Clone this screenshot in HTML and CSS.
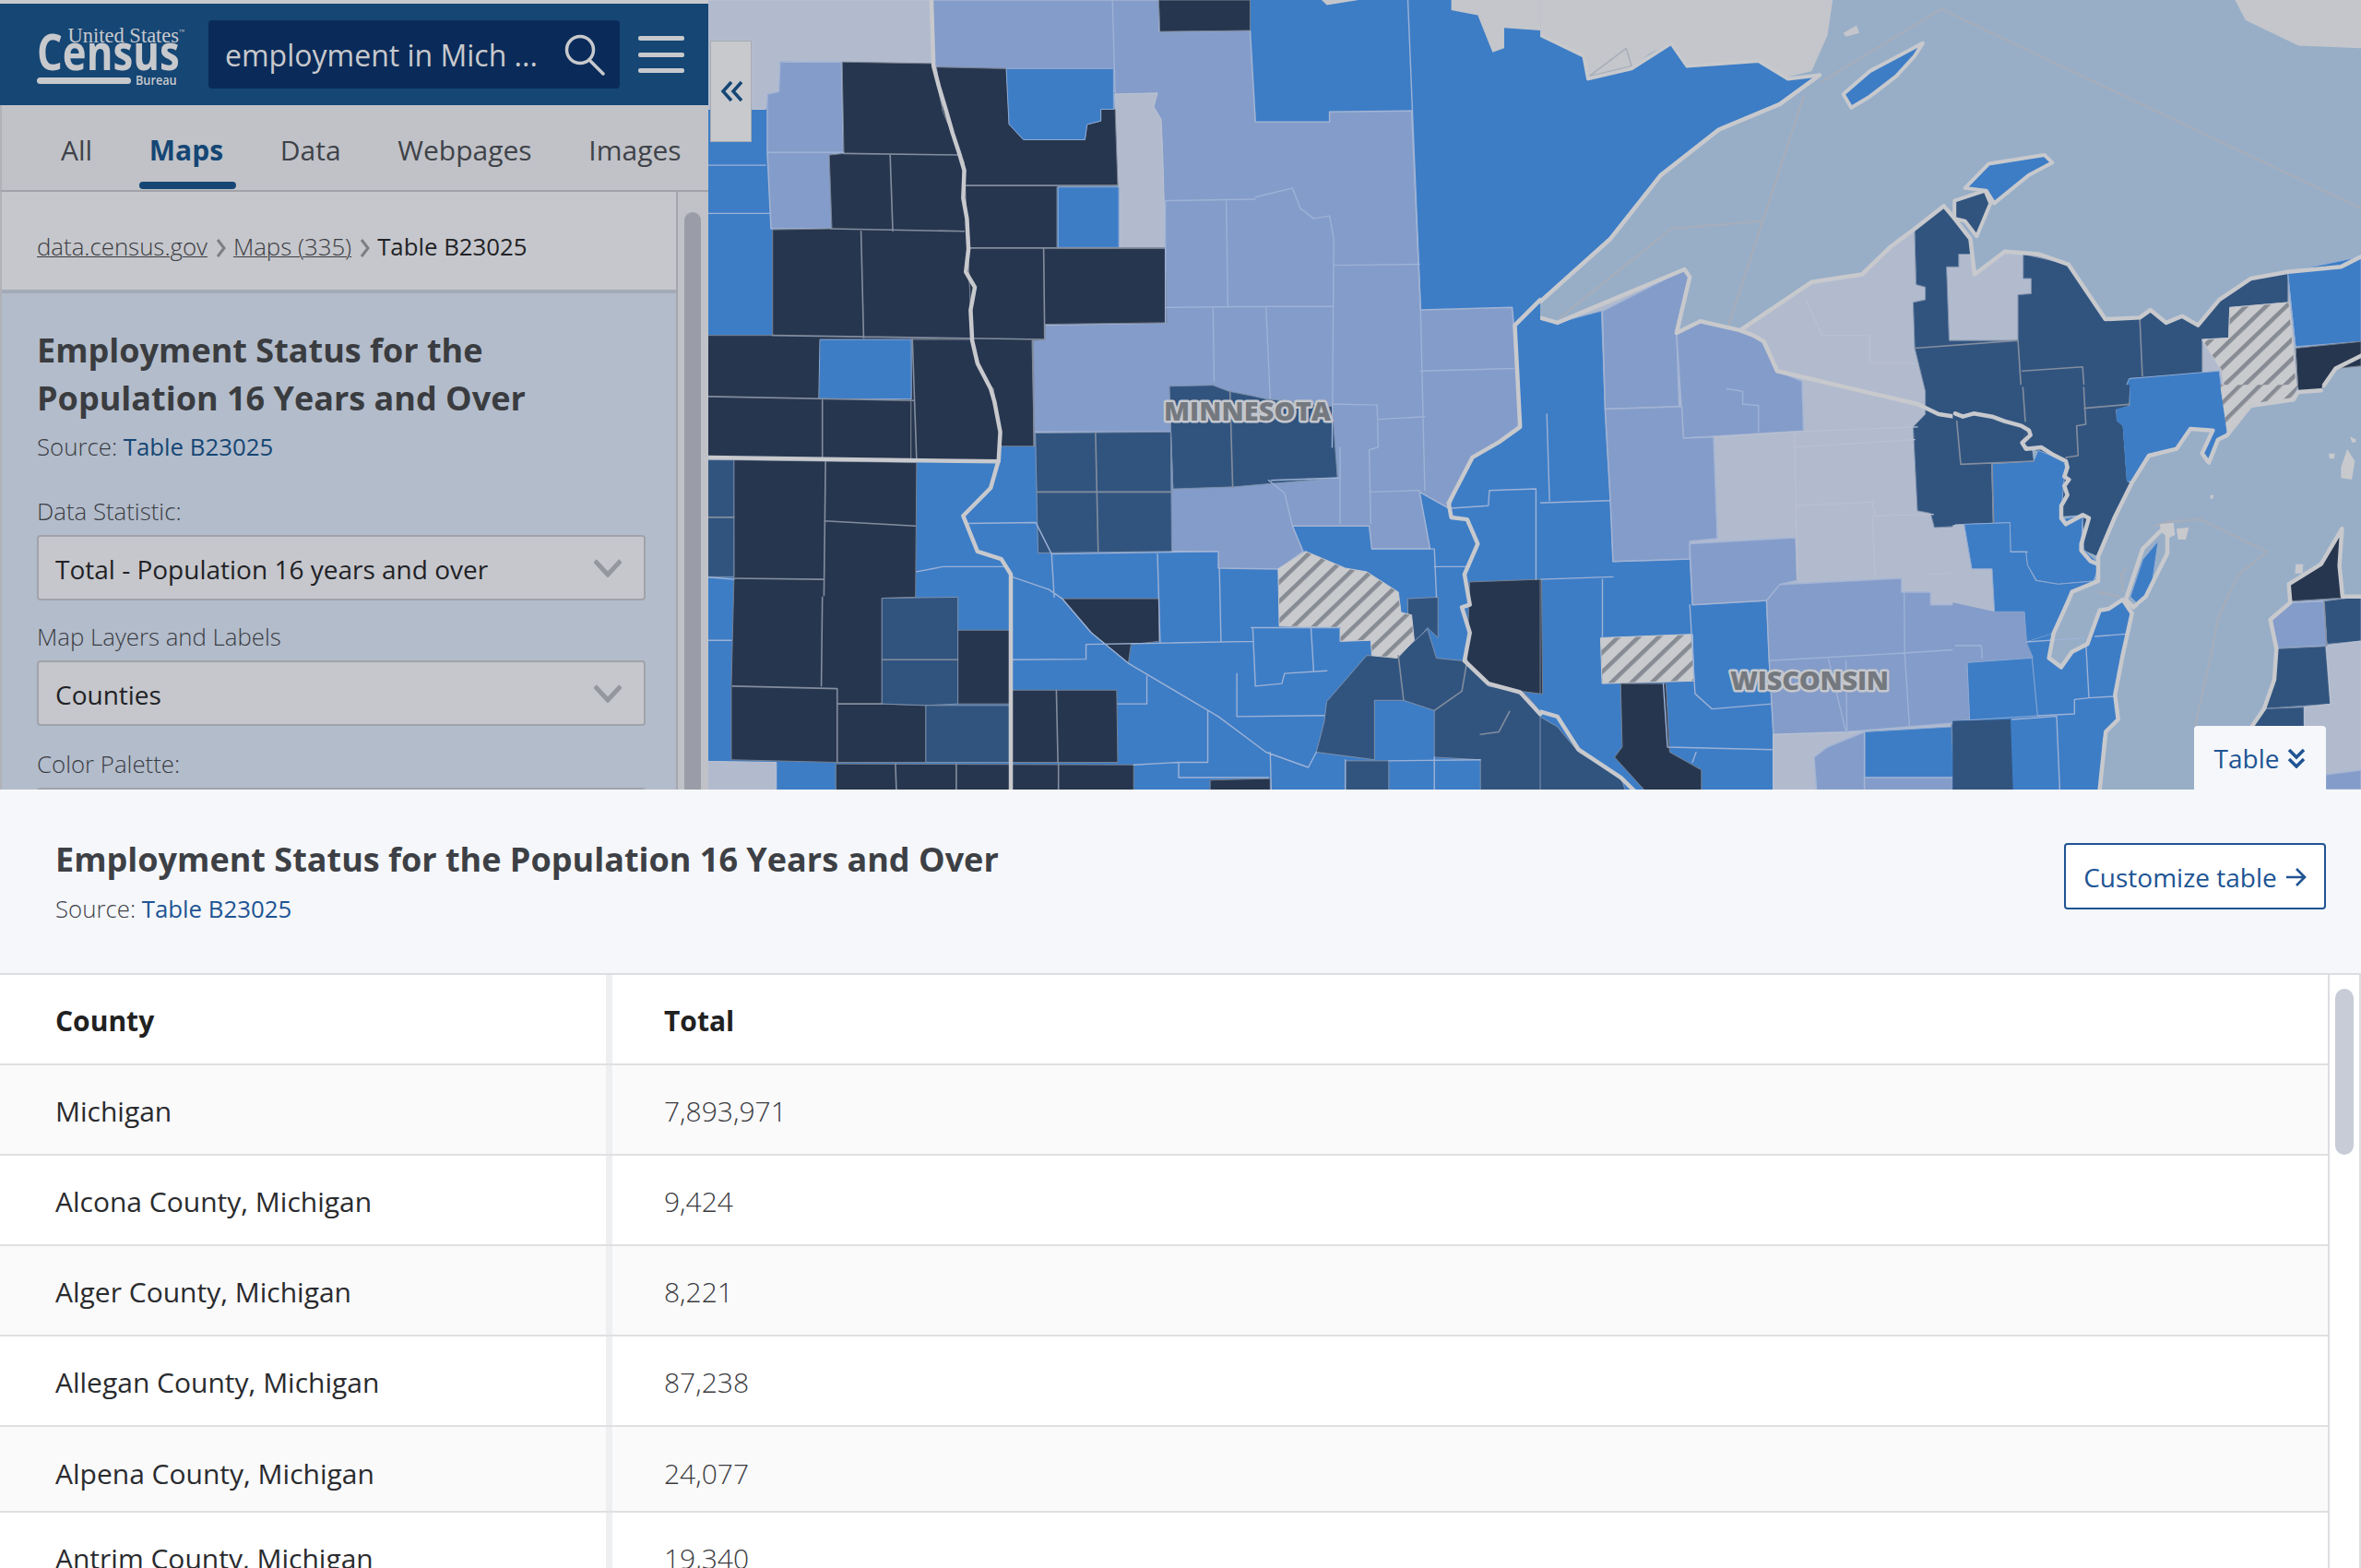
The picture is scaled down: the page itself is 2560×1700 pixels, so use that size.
FILE: index.html
```html
<!DOCTYPE html>
<html lang="en">
<head>
<meta charset="utf-8">
<title>Employment Status for the Population 16 Years and Over</title>
<link rel="stylesheet" href="styles.css">
</head>
<body>
<div class="app">
  <section class="top">
    <aside class="side">
      <div class="strip"></div>
      <header class="head">
        <div class="logo">
          <div class="logo-us">United States<sup>™</sup></div>
          <div class="logo-census">Census</div>
          <div class="logo-foot"><span class="logo-bar"></span><span class="logo-bureau">Bureau</span></div>
        </div>
        <div class="search">
          <span class="search-text">employment in Mich ...</span>
          <svg class="search-icon" viewBox="0 0 44 44"><circle cx="17" cy="17" r="14.5"/><path d="M27 28 L42 43"/></svg>
        </div>
        <div class="burger"><span></span><span></span><span></span></div>
      </header>
      <nav class="tabs">
        <a class="tab">All</a>
        <a class="tab tab-on">Maps</a>
        <a class="tab">Data</a>
        <a class="tab">Webpages</a>
        <a class="tab">Images</a>
      </nav>
      <div class="side-body">
        <div class="side-main">
          <div class="crumbs">
            <a class="crumb-link">data.census.gov</a>
            <svg class="crumb-sep" viewBox="0 0 10 20"><path d="M1 1 L8 10 L1 19"/></svg>
            <a class="crumb-link">Maps (335)</a>
            <svg class="crumb-sep" viewBox="0 0 10 20"><path d="M1 1 L8 10 L1 19"/></svg>
            <span class="crumb-now">Table B23025</span>
          </div>
          <div class="panel">
            <h2 class="panel-title">Employment Status for the Population 16 Years and Over</h2>
            <p class="source source-dim">Source: <a class="src-link-dim">Table B23025</a></p>
            <label class="field-label first">Data Statistic:</label>
            <div class="select"><span>Total - Population 16 years and over</span><svg class="chev" viewBox="0 0 30 20"><path d="M1 2 L15 17 L29 2"/></svg></div>
            <label class="field-label">Map Layers and Labels</label>
            <div class="select"><span>Counties</span><svg class="chev" viewBox="0 0 30 20"><path d="M1 2 L15 17 L29 2"/></svg></div>
            <label class="field-label last">Color Palette:</label>
            <div class="select"></div>
          </div>
        </div>
        <div class="side-scroll"><div class="side-thumb"></div></div>
      </div>
    </aside>
    <div class="map">
      <svg class="map-svg" viewBox="768 0 1792 856" preserveAspectRatio="none">
        <defs>
          <pattern id="hatch" width="27" height="27" patternUnits="userSpaceOnUse" patternTransform="rotate(45)">
            <rect width="27" height="27" fill="#c9cacd"/>
            <rect width="8" height="27" fill="#868b94"/>
          </pattern>
          <pattern id="hatch3" width="46" height="46" patternUnits="userSpaceOnUse" patternTransform="rotate(45)">
            <rect width="46" height="46" fill="#c9cacd"/>
            <rect width="13" height="46" fill="#868b94"/>
          </pattern>
        </defs>
        <g transform="translate(1660,0) scale(.574,.551)">
          <rect x="-5" y="0" width="1580" height="1561" class="lake"/>
          <path class="faint" d="M550,160 L775,18 L1568,410 M515,190 L370,650 M55,625 L265,450 L435,435"/>
          <polygon class="can" points="0,0 570,0 560,70 530,140 470,155 430,120 330,130 295,130 265,85 225,105 190,135 110,155 100,110 60,105 5,85 0,60"/>
          <polygon class="can" points="1330,0 1568,0 1568,95 1450,90 1350,40"/>
          <polygon class="can" points="590,65 615,50 620,65 595,72"/>
          <polygon class="faint-thin" points="110,150 180,95 190,130"/>
          <polygon class="m coast" points="0,60 100,110 108,155 190,135 265,85 295,130 430,120 485,155 545,148 470,205 355,255 245,345 150,470 0,610"/>
          <polygon class="m coast" points="590,185 640,140 740,85 725,110 690,150 640,190 605,212"/>
          <polygon class="g" points="0,620 50,635 290,530 300,545 275,655 320,632 395,650 530,555 625,540 680,485 725,450 780,405 800,430 830,470 838,540 895,495 960,500 1015,520 1085,628 1150,625 1170,610 1200,635 1230,622 1260,640 1300,590 1360,548 1430,535 1530,525 1568,505 1568,700 1520,725 1490,770 1440,800 1350,810 1300,870 1220,880 1160,900 1130,950 1070,1100 1075,1125 1015,1175 985,1280 1005,1315 1060,1260 1080,1205 1120,1195 1135,1210 1105,1350 1105,1420 1070,1470 1065,1561 0,1561"/>
          <polygon class="m" points="0,625 50,635 133,612 140,805 150,985 155,1105 300,1100 305,1190 445,1182 450,1300 458,1445 630,1440 795,1430 910,1420 1000,1415 995,1380 1105,1380 1100,1420 1070,1470 1065,1561 0,1561"/>
          <polygon class="l" points="135,612 290,530 300,545 275,655 280,800 140,805"/>
          <polygon class="l" points="275,655 320,632 395,650 435,670 465,730 512,750 515,848 288,862"/>
          <polygon class="l" points="140,805 285,800 288,862 345,860 352,1060 300,1065 300,1100 155,1105 150,985"/>
          <polygon class="l" points="300,1070 500,1058 503,1142 470,1150 470,1180 305,1190"/>
          <polygon class="l" points="445,1182 470,1150 700,1138 700,1165 755,1165 755,1190 815,1190 815,1215 930,1210 940,1270 950,1300 825,1305 830,1420 595,1440 458,1445 450,1300"/>
          <polygon class="m" points="825,1305 950,1300 958,1415 830,1422"/>
          <polygon class="m" points="870,915 950,895 1015,905 1005,1030 1050,1020 1045,1085 1070,1120 1015,1175 990,1260 935,1270 930,1210 875,1210 870,1120 830,1120 820,1040 875,1035"/>
          <polygon class="d" points="725,450 785,405 800,430 830,470 830,500 808,500 808,525 785,525 790,670 920,670 920,580 945,578 945,548 930,548 930,500 1015,520 1085,628 1150,625 1170,610 1200,635 1230,622 1260,640 1300,590 1360,548 1430,535 1430,595 1320,605 1318,665 1268,668 1268,735 1130,745 1130,805 1105,810 1120,880 1125,950 1070,1100 1040,1080 1050,1020 1005,1030 1015,905 950,890 950,910 870,915 872,1032 762,1038 755,1010 730,1005 722,840 745,815 745,770 725,685 722,595 745,590 745,565 728,560"/>
          <polygon class="d coast" points="800,395 858,375 868,400 842,465 820,435 800,430"/>
          <polygon class="m coast" points="820,370 865,322 970,305 985,320 940,345 875,400 860,375"/>
          <polygon class="m" points="1105,810 1130,745 1300,730 1312,825 1285,850 1245,850 1220,880 1160,900 1130,950 1120,880"/>
          <polygon class="h" points="1268,668 1318,665 1320,605 1432,595 1447,770 1350,800 1320,850 1305,730"/>
          <polygon class="m" points="1430,535 1568,505 1568,672 1445,682"/>
          <polygon class="x" points="1445,685 1568,672 1568,720 1520,725 1490,765 1450,775"/>
          <polygon class="x" points="0,1140 20,1140 22,1365 0,1365"/>
          <polygon class="h" points="132,1255 305,1248 308,1340 135,1345"/>
          <polygon class="x" points="170,1345 255,1345 262,1480 322,1515 322,1561 220,1561 158,1490 172,1470"/>
          <polygon class="d" points="0,1400 50,1430 90,1480 170,1530 180,1561 0,1561"/>
          <polygon class="d" points="795,1425 908,1422 912,1540 800,1545"/>
          <polygon class="g" points="458,1445 630,1440 630,1561 458,1561"/>
          <polygon class="l" points="535,1490 560,1470 630,1440 630,1561 540,1561"/>
          <polygon class="l" points="630,1530 800,1530 800,1561 630,1561"/>
          <path class="ln-l" d="M30,815 L35,985 M0,990 L150,985 M8,965 L10,1135 M15,1140 L155,1135 M135,1140 L135,1255 M300,1190 L310,1365 L342,1395 L455,1385 M250,1345 L258,1470 L455,1475 M305,1500 L312,1480 M595,1300 L597,1440 M562,1297 L595,1440 M450,1300 L705,1285 L850,1275 L855,1305 M705,1165 L706,1285 L715,1430 M370,765 L400,770 L400,795 L430,798 L430,850"/>
          <path class="ln-d" d="M725,685 L920,670 L930,830 M928,730 L1042,722 L1048,805 L1130,805 M1042,805 L1032,845 L1032,900 M1150,625 L1155,740"/>
          <path class="ln-g" d="M345,860 L490,850 L730,840 M495,880 L725,865 M500,995 L645,988 L650,1015 L760,1012 M498,850 L503,1140 M645,1015 L650,1135 M755,1130 L870,1122 M520,590 L550,660 L640,660 L640,715 L725,715"/>
          <path class="shore" d="M0,620 L50,635 L290,530 L300,545 L275,655 L320,632 L395,650 L530,555 L625,540 L680,485 L725,450 L780,405 L800,430 L830,470 L838,540 L895,495 L960,500 L1015,520 L1085,628 L1150,625 L1170,610 L1200,635 L1230,622 L1260,640 L1300,590 L1360,548 L1430,535 L1530,525 L1568,505 M1568,700 L1520,725 L1490,770 L1440,800 L1350,810 M0,610 L150,470 L245,345 L355,255 L470,205 L545,148"/>
          <path class="border" d="M395,650 L420,660 L440,672 L465,730 L730,795 L770,815 L801,820 M0,1395 L50,1410 L90,1475 L170,1530 L200,1561"/>
        </g>
        <g transform="translate(2120,420) scale(.33333)">
          <rect x="0" y="0" width="1320" height="1308" class="lake"/>
          <path class="faint" d="M650,450 L700,435 L800,430 L1015,535 L920,610 L855,750 L830,880 L780,1100 M465,665 L535,680 M555,590 L540,610 L545,660"/>
          <polygon class="d ns" points="-8,-8 568,-8 565,60 523,72 525,108 545,125 558,305 572,312 465,550 420,530 415,415 340,420 360,240 250,200 215,180 240,130 -8,85"/>
          <polygon class="d ns" points="-8,85 50,85 120,95 240,130 215,180 250,205 255,240 120,248 125,440 30,445 -8,445"/>
          <polygon class="m" points="120,248 255,240 270,205 360,240 345,400 340,430 415,415 410,520 470,575 450,630 335,640 265,628 235,578 230,535 180,535 178,440 125,442"/>
          <polygon class="g ns" points="-8,448 30,445 55,590 120,590 128,730 -8,700"/>
          <polygon class="m" points="30,445 178,440 180,535 230,535 235,578 262,628 335,640 450,630 380,670 368,680 320,800 232,828 225,730 128,730 120,590 55,590"/>
          <polygon class="m ns" points="232,828 320,800 305,880 345,910 380,860 430,835 470,725 500,720 545,690 575,735 545,870 520,1000 530,1080 480,1140 470,1308 -8,1308 -8,1085 48,1082 40,895 250,880"/>
          <polygon class="l ns" points="-8,700 128,730 225,730 232,828 255,880 40,895 48,1080 -8,1085"/>
          <polygon class="m" points="40,895 250,880 268,1068 48,1082"/>
          <polygon class="d ns" points="-8,1085 180,1080 188,1308 -8,1308"/>
          <polygon class="m ns" points="525,70 568,60 568,-8 862,-8 885,155 855,170 830,240 805,225 838,140 765,135 720,200 630,222 575,305 558,305 545,125 525,108"/>
          <polygon class="h3 ns" points="862,-8 1115,-8 1100,40 960,60 885,150"/>
          <polygon class="x ns" points="1115,-8 1195,-8 1190,10 1118,15"/>
          <polygon class="x" points="1258,460 1250,580 1258,685 1095,695 1085,640 1190,575"/>
          <polygon class="d" points="1200,695 1320,680 1320,825 1210,835"/>
          <polygon class="l" points="1030,755 1090,700 1198,695 1208,840 1045,850"/>
          <polygon class="d" points="1045,850 1205,842 1220,1030 1005,1045 1038,950"/>
          <polygon class="d" points="1005,1045 1135,1040 1138,1308 900,1308 960,1110"/>
          <polygon class="g" points="1208,840 1320,825 1320,1308 1135,1308 1135,1040 1220,1030"/>
          <polygon class="l" points="1205,1260 1320,1245 1320,1308 1205,1308"/>
          <polygon class="m" points="570,680 610,560 660,500 640,640 600,710"/>
          <polygon class="isle" points="720,460 760,455 750,495 725,495"/>
          <polygon class="isle" points="1108,575 1132,575 1130,605 1105,605"/>
          <polygon class="isle" points="1255,260 1275,200 1300,240 1290,300 1255,295"/>
          <polygon class="isle" points="1215,215 1235,215 1232,232 1218,232"/>
          <polygon class="isle" points="1285,160 1305,170 1300,180 1290,178"/>
          <polygon class="isle" points="830,350 840,350 838,362 830,362"/>
          <polygon class="isle" points="665,445 710,440 715,480 695,490 670,470"/>
          <path class="ln-d" d="M5,110 L18,250 L255,240 M220,0 L228,110 M395,125 L400,222 L360,228 M395,125 L425,120 L418,0 M420,68 L565,55 M120,250 L125,440 M1200,695 L1208,840"/>
          <path class="ln-l" d="M425,830 L435,1010 L388,1015 L388,1062 L268,1068 M435,1010 L515,1005 M330,1070 L340,1308 M185,1080 L330,1070 M455,810 L555,802 M232,828 L420,815 M0,840 L85,840 L88,880 M180,535 L235,535"/>
          <path class="shore" d="M465,555 L465,630 L380,665 L370,690 L320,800 L305,880 L345,910 L380,860 L430,835 L470,725 L500,720 L545,690 L575,735 L545,870 L520,1000 L530,1080 L490,1120 L470,1308 M465,550 L520,420 L575,310 L630,222 L720,200 L765,135 L838,140 L803,215 L825,245 L855,170 L885,155 L960,60 L1100,40 L1115,15 L1190,10 M1258,460 L1190,575 L1085,640 L1090,700 L1025,755 L1045,850 L1038,950 L1005,1045 L960,1110 M1258,460 L1250,580 L1260,680 L1320,680 M555,690 L610,525 L665,470 L690,450 L690,540 L640,640 L620,680 L580,715 L555,690"/>
          <path class="border" d="M0,85 L25,95 L60,85 L120,95 L160,110 L215,125 L240,140 L245,155 L218,180 L230,200 L280,195 L320,220 L360,240 L365,260 L355,290 L370,300 L355,320 L365,350 L345,385 L345,425 L360,445 L415,415 L435,425 L410,510 L410,530 L440,565 L465,575"/>
        </g>
        <g transform="translate(770,0) scale(.574,.551)">
          <rect x="-10" y="0" width="1578" height="1561" class="m-flat"/>
          <polygon class="g" points="-10,0 420,0 420,125 250,122 132,120 130,180 108,185 105,215 -10,215"/>
          <polygon class="l" points="420,0 848,0 848,62 1020,60 1030,240 1170,240 1170,220 1325,218 1342,610 1515,605 1518,640 1530,820 1525,845 1490,870 1440,900 1415,950 1395,1000 1340,968 1360,1080 1250,1080 1245,1035 1100,1035 1120,1085 1075,1120 960,1118 960,1085 870,1085 870,850 610,850 610,640 860,635 860,490 770,490 765,180 420,130"/>
          <polygon class="g" points="765,185 845,183 838,210 852,235 855,305 860,488 772,487"/>
          <polygon class="l" points="132,122 248,122 252,300 225,305 232,450 115,450 108,300 108,185 130,180"/>
          <polygon class="can" points="1400,0 1568,0 1568,60 1500,55 1500,95 1478,103 1450,30 1400,20"/>
          <polygon class="can" points="1155,0 1225,0 1165,10"/>
          <polygon class="x" points="848,0 1020,0 1020,60 850,62"/>
          <polygon class="x" points="250,122 420,125 440,220 480,320 490,560 495,668 380,668 380,905 -10,902 -10,660 118,660 118,452 230,450 225,305 252,302"/>
          <polygon class="x" points="428,132 560,135 565,245 592,275 708,275 712,245 738,238 738,215 765,215 770,365 655,368 655,488 860,488 862,635 632,638 632,668 608,670 612,878 545,878 535,765 515,740 495,670 490,560 480,320 440,220"/>
          <polygon class="x" points="380,668 495,668 515,740 535,765 548,850 545,908 380,905"/>
          <polygon class="m" points="560,135 762,135 762,215 738,215 738,238 712,245 708,275 592,275 565,245"/>
          <polygon class="m" points="658,368 772,368 772,487 658,487"/>
          <polygon class="m" points="208,668 380,668 380,785 206,785"/>
          <polygon class="x" points="45,905 390,910 388,1175 325,1177 325,1385 408,1388 408,1500 238,1500 40,1495 40,1350 45,1140"/>
          <polygon class="x" points="468,1240 565,1240 565,1385 468,1385"/>
          <polygon class="x" points="570,1358 768,1358 770,1500 570,1500"/>
          <polygon class="x" points="238,1503 800,1505 800,1561 238,1561"/>
          <polygon class="x" points="665,1178 848,1178 848,1262 795,1268 790,1305 720,1245"/>
          <polygon class="x" points="1435,1145 1568,1140 1568,1365 1530,1360 1470,1350 1430,1300"/>
          <polygon class="x" points="945,1535 1058,1532 1058,1561 945,1561"/>
          <polygon class="d" points="615,852 870,850 872,1085 620,1088"/>
          <polygon class="d" points="868,760 950,758 980,770 1020,778 1050,785 1175,800 1185,940 990,958 875,962"/>
          <polygon class="d" points="325,1177 468,1175 468,1298 468,1385 408,1388 325,1385"/>
          <polygon class="d" points="408,1388 565,1388 565,1500 408,1500"/>
          <polygon class="d" points="-10,905 45,905 45,1135 -10,1135"/>
          <polygon class="d" points="1318,1178 1375,1175 1375,1255 1355,1235 1320,1280"/>
          <polygon class="d" points="1165,1380 1240,1290 1300,1290 1355,1238 1372,1295 1420,1300 1470,1350 1540,1365 1568,1400 1568,1561 1455,1561 1455,1495 1368,1490 1368,1398 1310,1378 1255,1378 1255,1495 1145,1480 1160,1420"/>
          <polygon class="d" points="1200,1497 1282,1497 1282,1561 1200,1561"/>
          <polygon class="g" points="-10,1498 125,1500 125,1561 -10,1561"/>
          <polygon class="h" points="1125,1085 1200,1118 1240,1125 1300,1165 1305,1205 1325,1210 1330,1260 1298,1295 1250,1290 1248,1260 1190,1262 1190,1235 1075,1232 1073,1120"/>
          <path class="ln-d" d="M252,302 L475,305 M340,305 L345,455 M228,450 L480,455 M285,455 L290,665 M480,365 L770,365 M490,488 L860,488 M630,488 L632,668 M118,660 L632,668 M-10,780 L385,788 M212,785 L212,905 M382,668 L390,905 M218,905 L215,1172 M216,1025 L388,1035 M45,1138 L213,1140 M212,1175 L210,1350 M42,1350 L240,1355 M240,1355 L240,1500 M325,1385 L240,1385 M654,1358 L657,1500 M350,1503 L352,1561 M465,1503 L465,1561 M658,1503 L658,1561 M610,670 L612,878 M728,852 L733,1085 M617,968 L872,968 M982,770 L987,958 M1300,1290 L1310,1378 M1430,1300 L1420,1360 L1368,1398 M-10,1018 L45,1018 M1510,1400 L1490,1440 L1455,1445 M325,1298 L468,1298"/>
          <path class="ln-l" d="M860,395 L1030,392 M975,395 L978,605 M862,605 L1050,603 M950,605 L952,750 M1050,603 L1058,785 M1050,603 L1178,603 M1178,522 L1340,520 M1178,470 L1175,880 M1030,388 L1100,370 L1115,410 L1140,430 L1170,425 L1178,470 M1175,795 L1260,797 L1262,880 L1245,885 L1248,1030 M1262,825 L1350,820 M1342,730 L1518,725 M1342,610 L1350,965 M1245,968 L1340,965 M1055,945 L1085,970 L1100,1035 M1190,880 L1190,1030 M760,0 L765,180 M1190,940 L1060,945 M860,395 L860,635 M390,1125 L440,1115 L560,1115 M570,1135 L640,1160 L665,1178 L720,1245 L790,1305 L960,1410 L1050,1480 L1130,1510 L1145,1480 M645,1090 L960,1085 M645,1090 L650,1175 M845,1090 L850,1265 M570,1298 L710,1297 L710,1268 L1025,1262 M962,1118 L965,1262 M1025,1235 L1030,1350 L1080,1345 L1085,1325 L1165,1320 M770,1385 L825,1385 L825,1330 M940,1400 L940,1500 L885,1500 L885,1530 L1055,1530 M1058,1480 L1060,1561 M995,1325 L995,1410 L1160,1408 M1135,1235 L1140,1320 M1368,1115 L1435,1115 M1400,1000 L1470,995 L1472,965 L1560,962 L1560,1140 M-10,325 L105,325 M-10,420 L115,420 M108,300 L252,300 M485,1030 L615,1028 L645,1090 M1318,0 L1342,610 M1250,1080 L1368,1080 L1372,1175 M1200,1495 L1200,1561 M1368,1490 L1368,1561 M1282,1497 L1455,1495 M-10,1260 L40,1260 M-10,1135 L45,1140 M800,1505 L885,1500 M1022,1235 L1190,1235"/>
          <path class="border" d="M418,0 L422,130 L432,170 L445,215 L458,262 L470,300 L480,335 L478,390 L485,430 L488,490 L483,535 L500,565 L492,610 L495,670 L505,715 L530,765 L537,790 L548,850 L545,905 L530,960 L478,1015 L505,1085 L550,1100 L568,1130 L568,1561 M-10,900 L545,908 M1568,590 L1520,640 L1530,840 L1490,870 L1440,900 L1415,950 L1395,990 L1400,1018 L1430,1022 L1450,1070 L1425,1130 L1435,1190 L1420,1195 L1435,1245 L1425,1300 L1470,1345 L1530,1362 L1568,1405"/>
        </g>
        <text class="state" x="1262" y="456" textLength="181">MINNESOTA</text>
        <text class="state" x="1876" y="748" textLength="172">WISCONSIN</text>
      </svg>
      <button class="collapse"><svg viewBox="0 0 26 24"><path d="M12 2 L3 12 L12 22 M23 2 L14 12 L23 22"/></svg></button>
      <button class="map-table">Table <svg viewBox="0 0 20 22"><path d="M2 2 L10 10 L18 2 M2 12 L10 20 L18 12"/></svg></button>
    </div>
  </section>
  <section class="title-bar">
    <div>
      <h1 class="main-title">Employment Status for the Population 16 Years and Over</h1>
      <p class="source">Source: <a class="src-link">Table B23025</a></p>
    </div>
    <button class="customize">Customize table <svg viewBox="0 0 24 24"><path d="M2 12 H21 M13 3 L22 12 L13 21"/></svg></button>
  </section>
  <section class="table-wrap">
    <div class="table">
      <div class="row row-head"><div class="cell cell-name">County</div><div class="cell">Total</div></div>
      <div class="row alt"><div class="cell cell-name">Michigan</div><div class="cell num">7,893,971</div></div>
      <div class="row"><div class="cell cell-name">Alcona County, Michigan</div><div class="cell num">9,424</div></div>
      <div class="row alt"><div class="cell cell-name">Alger County, Michigan</div><div class="cell num">8,221</div></div>
      <div class="row"><div class="cell cell-name">Allegan County, Michigan</div><div class="cell num">87,238</div></div>
      <div class="row alt row-short"><div class="cell cell-name">Alpena County, Michigan</div><div class="cell num">24,077</div></div>
      <div class="row"><div class="cell cell-name">Antrim County, Michigan</div><div class="cell num">19,340</div></div>
    </div>
    <div class="table-scroll"><div class="table-thumb"></div></div>
  </section>
</div>
</body>
</html>
```
FILE: styles.css
```css
* { box-sizing: border-box; }
html, body { margin: 0; padding: 0; }
body { font-family: "Open Sans", "Liberation Sans", sans-serif; background: #fff; color: #212121; }
.app { width: 2560px; height: 1700px; overflow: hidden; display: flex; flex-direction: column; }
.top { height: 856px; display: flex; flex: none; overflow: hidden; }

/* sidebar */
.side { width: 768px; flex: none; display: flex; flex-direction: column; background: #b3bccb; height: 856px; overflow: hidden; }
.strip { height: 4px; background: #c8c9cd; flex: none; }
.head { height: 110px; background: #154674; display: flex; align-items: center; flex: none; padding-left: 40px; }
.logo { width: 160px; color: #c8c9cd; margin: 4px 26px 0 0; display: flex; flex-direction: column; }
.logo-us { font-family: "Liberation Serif", serif; font-size: 22.5px; line-height: 20px; text-align: right; white-space: nowrap; }
.logo-us sup { font-size: 6px; line-height: 0; vertical-align: 10px; }
.logo-census { font-weight: 700; font-size: 53px; line-height: 34px; margin-top: -10px; transform: scaleX(.825); transform-origin: left; white-space: nowrap; height: 34px; }
.logo-foot { display: flex; align-items: center; gap: 5px; margin-top: 8px; }
.logo-bar { width: 102px; height: 7px; border-radius: 4px; background: #c8c9cd; flex: none; }
.logo-bureau { font-size: 13.5px; font-weight: 600; line-height: 13px; transform: scaleX(.94); transform-origin: left; }
.search { width: 446px; height: 74px; background: #0a2b59; border-radius: 4px; display: flex; align-items: center; justify-content: space-between; padding: 0 16px 0 18px; flex: none; }
.search-text { font-size: 32px; color: #c8c9cd; white-space: nowrap; }
.search-icon { width: 44px; height: 46px; fill: none; stroke: #c8c9cd; stroke-width: 3.5; stroke-linecap: round; }
.burger { margin-left: 20px; width: 50px; display: flex; flex-direction: column; gap: 12.5px; }
.burger span { display: block; height: 5px; background: #c8c9cd; border-radius: 2px; }
.tabs { height: 94px; background: #c0c2c7; display: flex; gap: 61.7px; padding: 0 0 0 64px; flex: none; border-bottom: 2px solid #a0a3a9; border-left: 2px solid #b0b2b8; }
.tab { font-size: 30px; color: #3f4249; line-height: 98px; height: 92px; position: relative; white-space: nowrap; }
.tab-on { font-weight: 700; color: #154674; }
.tab-on::after { content: ""; position: absolute; left: -11px; right: -14px; bottom: 1px; height: 8px; border-radius: 4px; background: #154674; }
.side-body { flex: 1; display: flex; min-height: 0; }
.side-main { width: 735px; flex: none; border-right: 2px solid #a4a7ae; overflow: hidden; border-left: 2px solid #b0b2b8; }
.side-scroll { flex: 1; background: #c0c2c7; padding: 22px 8px 0 7px; }
.side-thumb { background: #9a9da8; height: 100%; border-radius: 10px 10px 0 0; }
.crumbs { height: 110px; background: #c6c7cc; border-bottom: 4px solid #a3abb9; display: flex; align-items: center; padding: 12px 0 0 38px; font-size: 25.8px; gap: 6px; }
.crumb-link { color: #3a3c42; text-decoration: underline; text-decoration-thickness: 1px; font-weight: 300; }
.crumb-now { color: #212226; }
.crumb-sep { width: 10px; height: 20px; fill: none; stroke: #7d7f85; stroke-width: 3; margin: 4px 2px 0 4px; }
.panel { padding: 36px 38px 0; }
.panel-title { margin: 0; font-size: 36px; line-height: 52px; font-weight: 700; color: #3a3c40; width: 600px; }
.source { margin: 0; font-size: 25.8px; font-weight: 300; color: #3f4249; line-height: 34px; }
.source-dim { margin-top: 9px; color: #3a3d44; }
.src-link-dim { color: #154674; font-weight: 400; }
.src-link { color: #205493; font-weight: 400; }
.field-label { display: block; font-size: 25.8px; font-weight: 300; color: #3a3d44; line-height: 36px; margin: 21px 0 8px; }
.field-label.first { margin-top: 35px; }
.field-label.last { margin: 23px 0 8px; }
.select { height: 71px; width: 660px; background: #c6c7cc; border: 2px solid #a0a3aa; border-radius: 4px; display: flex; align-items: center; justify-content: space-between; padding: 3px 24px 0 18px; font-size: 28px; color: #212226; }
.chev { width: 30px; height: 20px; fill: none; stroke: #94979e; stroke-width: 5; margin-top: -3px; }

/* map */
.map { flex: 1; position: relative; overflow: hidden; background: #3d7dc6; }
.map-svg { display: block; width: 1792px; height: 856px; }
.map-svg polygon, .map-svg path { vector-effect: non-scaling-stroke; stroke-linejoin: round; stroke-linecap: round; }
.lake { fill: #98aec7; }
.can { fill: #c4c6cb; }
.isle { fill: #c8c9cd; }
.g { fill: #b2bbce; stroke: #bcc3d2; stroke-width: 1; }
.l { fill: #849cc9; stroke: #a3b4d4; stroke-width: 1.5; }
.m { fill: #3d7dc6; stroke: #8eaad3; stroke-width: 1; }
.m-flat { fill: #3d7dc6; }
.d { fill: #31547f; stroke: #7d90ab; stroke-width: 1; }
.x { fill: #27364f; stroke: #76808f; stroke-width: 1; }
.h { fill: url(#hatch); stroke: #c8c9cd; stroke-width: 1; }
.h3 { fill: url(#hatch3); stroke: #c8c9cd; stroke-width: 1; }
.map-svg .coast { stroke: #c8c9cd; stroke-width: 4; }
.map-svg .ns { stroke: none; }
.ln-l { fill: none; stroke: #9db2d6; stroke-width: 1.4; }
.ln-d { fill: none; stroke: #838d9e; stroke-width: 1.6; }
.ln-g { fill: none; stroke: #b9c0cf; stroke-width: 1.4; }
.border { fill: none; stroke: #c8c9cd; stroke-width: 4.5; }
.shore { fill: none; stroke: #c8c9cd; stroke-width: 4.5; }
.faint { fill: none; stroke: #a7adb9; stroke-width: 2; }
.faint-thin { fill: none; stroke: #a7adb9; stroke-width: 1.5; }
.state { font-family: "Open Sans", sans-serif; font-weight: 800; font-size: 29px; fill: #74787f; stroke: #c4c7cd; stroke-width: 5px; paint-order: stroke; stroke-linejoin: round; }
.collapse { position: absolute; left: 2px; top: 44px; width: 45px; height: 110px; background: #c8c9cd; border: 1px solid #a8abb1; padding: 0 0 0 10px; display: flex; align-items: center; }
.collapse svg { width: 26px; height: 24px; fill: none; stroke: #154674; stroke-width: 3.5; }
.map-table { position: absolute; right: 38px; bottom: 0; width: 143px; height: 69px; background: #f5f7fa; border: 0; border-radius: 4px 4px 0 0; font: 28px "Open Sans", sans-serif; color: #205493; display: flex; align-items: center; justify-content: center; gap: 9px; padding: 0; }
.map-table svg { width: 20px; height: 22px; fill: none; stroke: #205493; stroke-width: 3.5; }

/* title bar */
.title-bar { height: 201px; flex: none; background: #f5f7fa; border-bottom: 2px solid #dcdde0; display: flex; justify-content: space-between; align-items: flex-start; padding: 51px 38px 0 60px; }
.main-title { margin: 0 0 11px; font-size: 36px; line-height: 50px; font-weight: 700; color: #3d4045; }
.customize { margin-top: 7px; width: 284px; height: 72px; background: #fff; border: 2px solid #205493; border-radius: 4px; color: #205493; font: 28px "Open Sans", sans-serif; display: flex; align-items: center; justify-content: center; gap: 8px; padding: 2px 0 0; }
.customize svg { width: 24px; height: 24px; fill: none; stroke: #205493; stroke-width: 2.6; }

/* table */
.table-wrap { flex: 1; display: flex; min-height: 0; overflow: hidden; }
.table { flex: 1; border-right: 2px solid #dcdde0; }
.row { display: grid; grid-template-columns: 664px 1fr; height: 98px; border-bottom: 2px solid #e0e0e2; }
.row-head { height: 98px; }
.row-short { height: 93px; }
.alt { background: #fafafb; }
.cell { font-size: 30px; display: flex; align-items: center; padding: 2px 0 0 60px; color: #2a2b2e; }
.row-head .cell { font-weight: 700; color: #212121; }
.row-short .cell { padding-top: 9px; }
.cell-name { border-right: 7px solid #eeeff1; }
.num { font-weight: 300; color: #3a3b3f; }
.row .cell + .cell { padding-left: 56px; }
.table-scroll { width: 34px; flex: none; padding: 15px 6px 0 6px; border-right: 2px solid #dcdde0; }
.table-thumb { height: 180px; background: #c8ccd6; border-radius: 10px; }
```
